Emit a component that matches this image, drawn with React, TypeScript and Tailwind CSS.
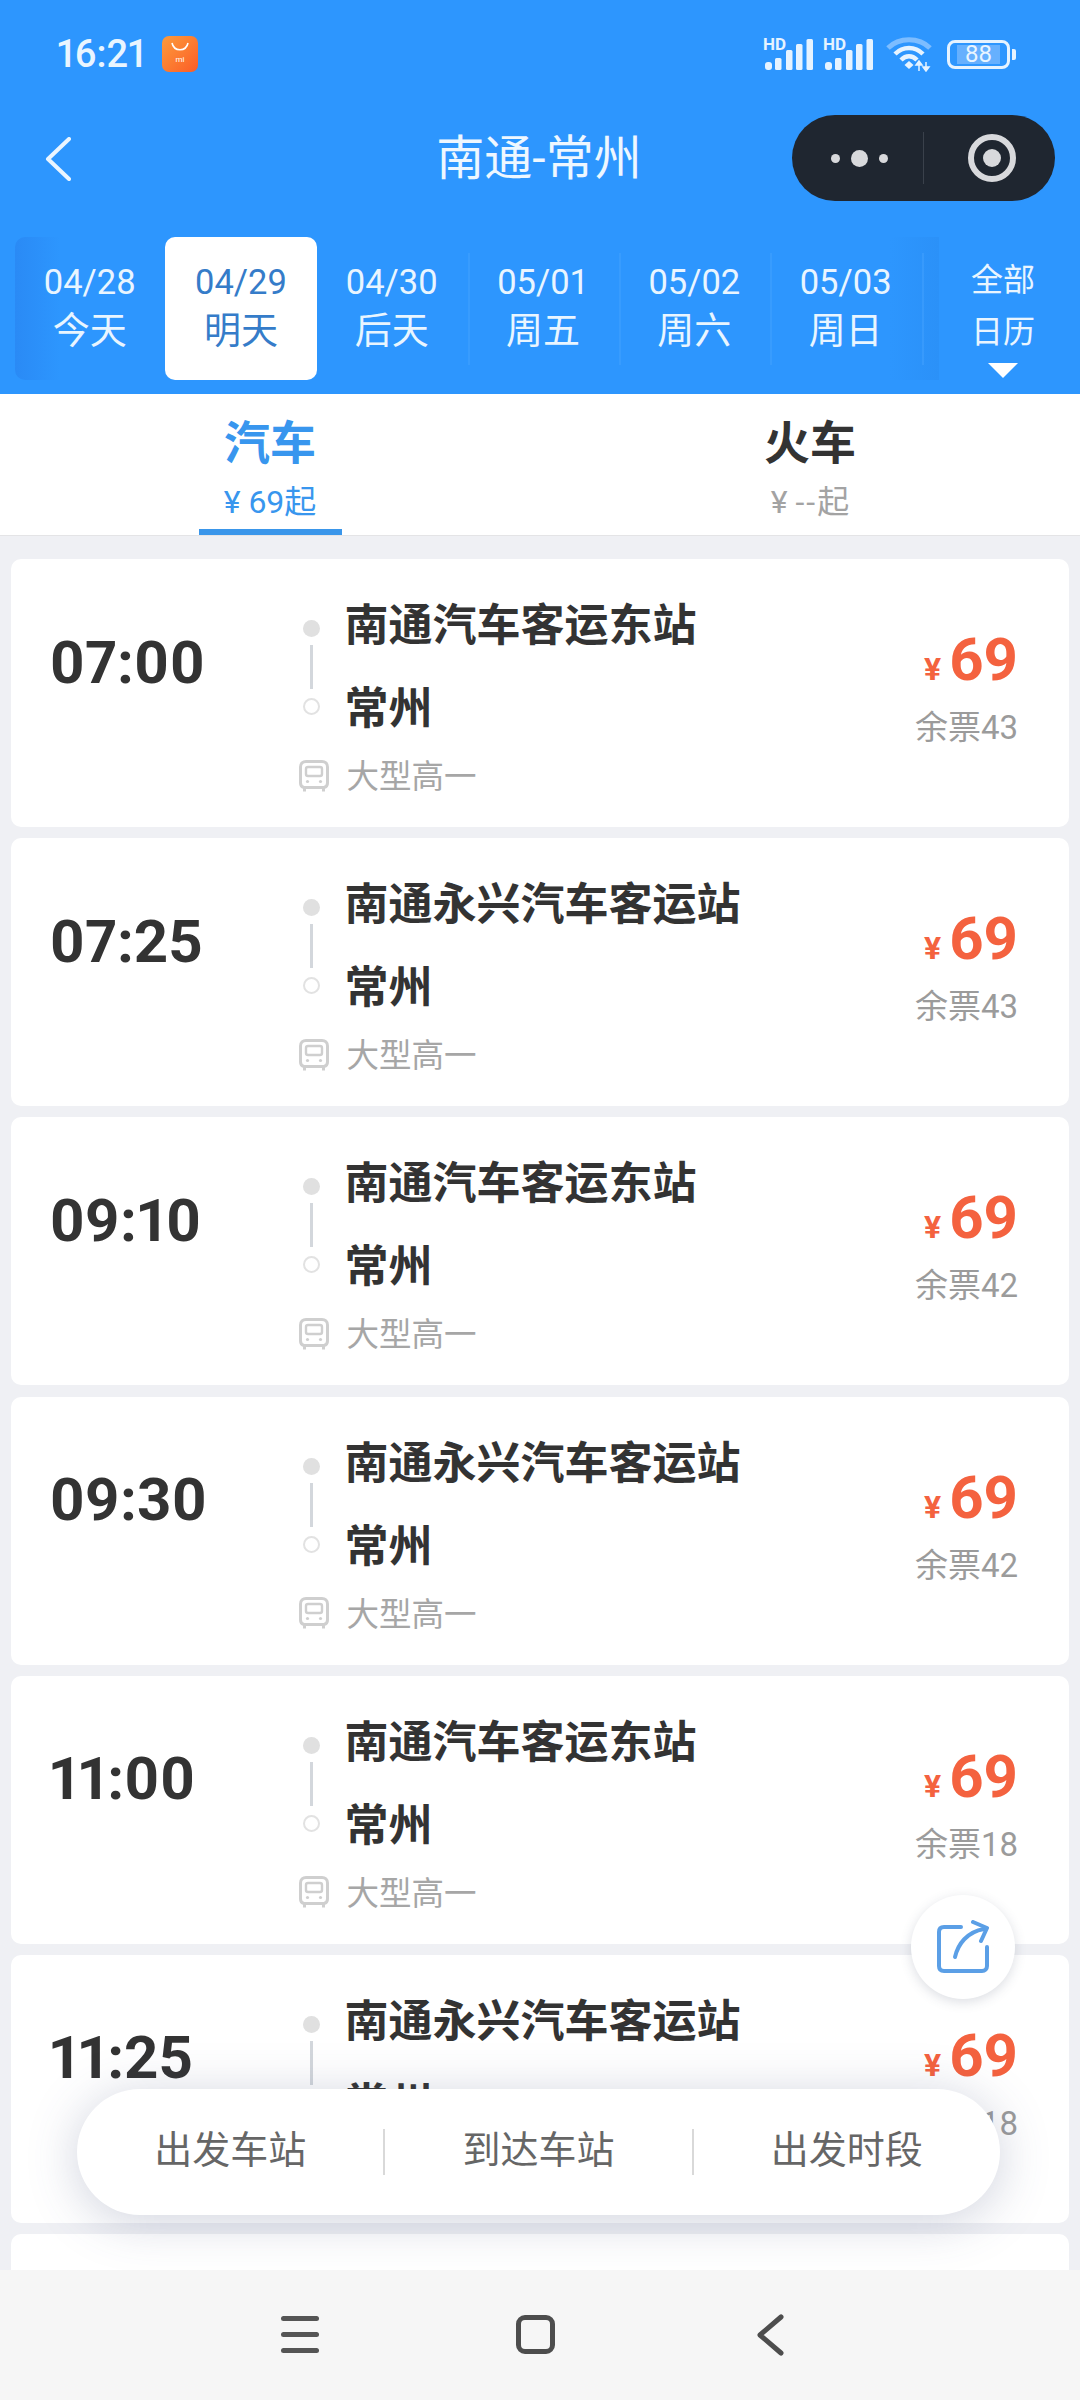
import React from "react";

const FONT = "font-[Roboto,'Noto_Sans_CJK_SC',sans-serif]";

const dates = [
  { d: "04/28", l: "今天" },
  { d: "04/29", l: "明天", active: true },
  { d: "04/30", l: "后天", divider: true },
  { d: "05/01", l: "周五", divider: true },
  { d: "05/02", l: "周六", divider: true },
  { d: "05/03", l: "周日", divider: true },
];

const rows = [
  { t: "07:00", s: "南通汽车客运东站", n: 43 },
  { t: "07:25", s: "南通永兴汽车客运站", n: 43 },
  { t: "09:10", s: "南通汽车客运东站", n: 42 },
  { t: "09:30", s: "南通永兴汽车客运站", n: 42 },
  { t: "11:00", s: "南通汽车客运东站", n: 18 },
  { t: "11:25", s: "南通永兴汽车客运站", n: 18 },
];

function Signal() {
  return (
    <svg width="50" height="40" viewBox="0 -8 50 40" className="mt-[-8px] block">
      <text x="0" y="12" fontSize="17" fontWeight="700" fill="#e6f3ff" fontFamily="Roboto">HD</text>
      <g fill="#e6f3ff">
        <rect x="2" y="24" width="7" height="8" rx="3" />
        <rect x="12" y="20" width="6.5" height="12" rx="1.5" />
        <rect x="23" y="12" width="6.5" height="20" rx="1.5" />
        <rect x="33" y="6" width="6.5" height="26" rx="1.5" />
        <rect x="43.5" y="1" width="6.5" height="31" rx="1.5" />
      </g>
    </svg>
  );
}

function Wifi() {
  return (
    <svg width="46" height="36" viewBox="0 0 46 36" className="block">
      <path d="M2 12 C13 1 33 1 44 12" fill="none" stroke="#7dbdff" strokeWidth="5" />
      <path d="M9 18 C17 10 29 10 37 18" fill="none" stroke="#e6f3ff" strokeWidth="4.5" />
      <path d="M15 24 C20 19 26 19 31 24" fill="none" stroke="#e6f3ff" strokeWidth="4.5" />
      <path d="M18.5 29 L23 25 L27.5 29 L23 33 Z" fill="#e6f3ff" />
      <path d="M33 35 V26 M33 25 L30 29 H36 Z M40 26 V35 M40 35 L37 31 H43 Z" fill="#e6f3ff" stroke="#e6f3ff" strokeWidth="1.5" />
    </svg>
  );
}

function Bus() {
  return (
    <svg width="30" height="32" viewBox="0 0 30 32" fill="none" stroke="#cfcfcf" strokeWidth="3" className="block">
      <path d="M5 27.5 C3 27 1.5 26 1.5 23 V7 C1.5 3.5 4 1.5 7 1.5 H23 C26 1.5 28.5 3.5 28.5 7 V23 C28.5 26 27 27 25 27.5" />
      <path d="M5 27.5 H25" />
      <rect x="7" y="7" width="16" height="9" rx="2" strokeWidth="2.4" />
      <path d="M5.5 27 V31.5 M24.5 27 V31.5" />
      <circle cx="8.5" cy="21.5" r="1.6" fill="#cfcfcf" stroke="none" />
      <circle cx="21.5" cy="21.5" r="1.6" fill="#cfcfcf" stroke="none" />
    </svg>
  );
}

function Row({ t, s, n }: { t: string; s: string; n: number }) {
  return (
    <div className="flex h-[268px] shrink-0 rounded-[10px] bg-white pl-[38.5px] pr-[51px]">
      <div className="mt-[73.5px] h-[60px] w-[247px] text-[60px] font-bold leading-[60px] text-[#333333] proportional-nums">{t}</div>
      <div className="flex w-[30px] flex-col items-center">
        <div className="mt-[61px] h-[17px] w-[17px] rounded-full bg-[#e0e0e0]" />
        <div className="mt-[8px] h-[44px] w-[3px] bg-[#d3d7dc]" />
        <div className="mt-[9px] h-[17px] w-[17px] rounded-full border-2 border-[#e2e2e2]" />
        <div className="ml-[4px] mt-[44.5px]"><Bus /></div>
      </div>
      <div className="ml-[18px] flex flex-col">
        <div className="mt-[39px] h-[56px] text-[44px] font-bold leading-[56px] text-[#333333]">{s}</div>
        <div className="mt-[27px] h-[56px] text-[44px] font-bold leading-[56px] text-[#333333]">常州</div>
        <div className="mt-[20px] h-[40px] pl-[2px] text-[32.5px] leading-[40px] text-[#a6a6a6]">大型高一</div>
      </div>
      <div className="ml-auto flex flex-col items-end">
        <div className="mt-[66px] flex h-[70px] items-baseline gap-[8px] font-bold leading-[70px] text-[#f4623f]">
          <span className="text-[32px]">¥</span>
          <span className="text-[60px]">69</span>
        </div>
        <div className="mt-[13px] h-[40px] text-[33px] leading-[40px] text-[#9b9b9b]">余票{n}</div>
      </div>
    </div>
  );
}

export default function App() {
  return (
    <div className={`${FONT} relative flex h-[2400px] w-[1080px] flex-col overflow-hidden bg-[#eff0f4]`}>
      <header className="relative h-[394px] shrink-0 bg-[#2d96fe] text-[#e9f5ff]">
        <div className="flex h-[108px] items-center pl-[57px] pr-[64px]">
          <span className="w-[87px] text-[38px] font-medium leading-none proportional-nums">16:21</span>
          <div className="ml-[18px] flex h-[36px] w-[36px] flex-col items-center rounded-[7px] bg-gradient-to-br from-[#fb9a3c] to-[#fb5a26]">
            <svg width="20" height="11" viewBox="0 0 20 11" className="mt-[6px]"><path d="M2 1 C4 10 16 10 18 1" fill="none" stroke="#fff" strokeWidth="1.6" /></svg>
            <span className="mt-[3px] text-[8px] leading-none text-white">mi</span>
          </div>
          <div className="ml-auto flex items-center">
            <Signal />
            <div className="ml-[10px]"><Signal /></div>
            <div className="ml-[13px]"><Wifi /></div>
            <div className="ml-[15px] flex h-[29px] w-[63px] items-center justify-center rounded-[8px] border-[3px] border-[#e6f3ff]">
              <div className="flex h-[19px] w-[43px] items-center justify-center bg-[#66b0fe] text-[24px] leading-none">88</div>
            </div>
            <div className="ml-[2px] h-[11px] w-[4px] rounded-r-[2px] bg-[#e6f3ff]" />
          </div>
        </div>
        <div className="relative flex h-[100px] items-center justify-center">
          <svg width="26" height="44" viewBox="0 0 26 44" className="absolute left-[45px] top-[29px]" fill="none" stroke="#eaf5ff" strokeWidth="4" strokeLinecap="round" strokeLinejoin="round">
            <path d="M24 2 L3 22 L24 42" />
          </svg>
          <h1 className="pr-[2px] pt-[2px] text-[48px] font-normal leading-none text-[#eef7ff]">南通-常州</h1>
          <div className="absolute left-[792px] top-[7px] flex h-[86px] w-[263px] items-center rounded-full bg-[#1f2630]">
            <div className="flex w-[131px] items-center justify-end gap-[11px] pr-[35px]">
              <span className="h-[9px] w-[9px] rounded-full bg-[#d8d9dc]" />
              <span className="h-[17px] w-[17px] rounded-full bg-[#d8d9dc]" />
              <span className="h-[9px] w-[9px] rounded-full bg-[#d8d9dc]" />
            </div>
            <div className="h-[52px] w-px bg-[#3a414b]" />
            <div className="ml-[44px] flex h-[48px] w-[48px] items-center justify-center rounded-full border-[6px] border-[#d8d9dc]">
              <span className="h-[18px] w-[18px] rounded-full bg-[#d8d9dc]" />
            </div>
          </div>
        </div>
        <div className="relative mt-[29px] flex h-[143px] pl-[14px]">
          <div className="absolute left-[15px] top-0 h-[143px] w-[45px] rounded-l-[10px] bg-gradient-to-r from-[#2a8af5] to-[#2d96fe]" />
          <div className="absolute left-[890px] top-0 h-[143px] w-[49px] bg-gradient-to-r from-[#2d96fe] to-[#2b91f8]" />
          {dates.map((x) => (
            <div key={x.d} className="relative flex w-[151.3px] shrink-0 items-center">
              <div className={`flex h-[143px] flex-1 flex-col items-center rounded-[10px] ${x.active ? "bg-white text-[#357cc9]" : ""}`}>
                <div className="mt-[22.5px] h-[44px] text-[34.5px] leading-[44px]">{x.d}</div>
                <div className="h-[56px] text-[37px] leading-[56px]">{x.l}</div>
              </div>
              {x.divider && <div className="h-[112px] w-px translate-x-[1.5px] bg-[#45a2fe]" />}
            </div>
          ))}
          <div className="relative flex flex-1 flex-col items-center pl-[4px]">
            <div className="mt-[20.5px] h-[44px] text-[32px] leading-[44px]">全部</div>
            <div className="mt-[8px] h-[44px] text-[32px] leading-[44px]">日历</div>
            <div className="mt-[9.5px] h-0 w-0 border-x-[15px] border-t-[15px] border-x-transparent border-t-white" />
          </div>
        </div>
      </header>

      <nav className="flex h-[142px] shrink-0 border-b border-[#e4e4e6] bg-white">
        <div className="flex flex-1 flex-col items-center">
          <div className="mt-[21px] h-[56px] text-[46px] font-bold leading-[56px] text-[#3896ee]">汽车</div>
          <div className="mt-[8px] h-[46px] text-[32px] leading-[46px] text-[#3896ee]">¥ 69起</div>
          <div className="mt-[4px] h-[6px] w-[143px] bg-[#3a96ea]" />
        </div>
        <div className="flex flex-1 flex-col items-center">
          <div className="mt-[21px] h-[56px] text-[46px] font-bold leading-[56px] text-[#333333]">火车</div>
          <div className="mt-[8px] h-[46px] text-[32px] leading-[46px] text-[#a3a3a3]">¥ <span className="tracking-[2px]">--</span>起</div>
        </div>
      </nav>

      <main className="flex min-h-0 flex-1 flex-col gap-[11.2px] overflow-hidden px-[11px] pt-[23px]">
        {rows.map((r) => (
          <Row key={r.t} {...r} />
        ))}
        <div className="h-[268px] shrink-0 rounded-[10px] bg-white" />
      </main>

      <footer className="relative z-10 flex h-[130px] shrink-0 items-center justify-center bg-[#f6f6f6]">
        <div className="absolute left-[281px] top-[46px] flex flex-col gap-[11px]">
          <span className="h-[5px] w-[38px] rounded-full bg-[#555555]" />
          <span className="h-[5px] w-[38px] rounded-full bg-[#555555]" />
          <span className="h-[5px] w-[38px] rounded-full bg-[#555555]" />
        </div>
        <div className="absolute left-[516px] top-[45px] h-[39px] w-[39px] rounded-[9px] border-[5px] border-[#4d4d4d]" />
        <svg width="28" height="42" viewBox="0 0 28 42" className="absolute left-[756px] top-[44px]" fill="none" stroke="#4d4d4d" strokeWidth="5" strokeLinecap="round" strokeLinejoin="round">
          <path d="M25 3 L4 21 L25 39" />
        </svg>
      </footer>

      <div className="absolute left-[911px] top-[1895px] flex h-[104px] w-[104px] items-center justify-center rounded-full bg-white shadow-[0_3px_12px_rgba(60,70,100,0.18)]">
        <svg width="52" height="54" viewBox="0 0 52 54" fill="none" stroke="#5b9fe6" strokeWidth="4" strokeLinecap="round" strokeLinejoin="round">
          <path d="M24 7 H7 C3.5 7 2 9 2 12 V46 C2 49 3.5 51 7 51 H45 C48 51 50 49 50 46 V27" />
          <path d="M18 37 C21 24 30 12 47 9" />
          <path d="M36 2 L50 8 L44 21" />
        </svg>
      </div>

      <div className="absolute left-[77px] top-[2089px] flex h-[126px] w-[923px] items-center rounded-full bg-white text-[38px] text-[#666666] shadow-[0_6px_50px_rgba(70,80,125,0.26)]">
        <div className="flex-1 pb-[4px] text-center">出发车站</div>
        <div className="h-[46px] w-[2px] bg-[#d9d9d9]" />
        <div className="flex-1 pb-[4px] text-center">到达车站</div>
        <div className="h-[46px] w-[2px] bg-[#d9d9d9]" />
        <div className="flex-1 pb-[4px] text-center">出发时段</div>
      </div>
    </div>
  );
}
